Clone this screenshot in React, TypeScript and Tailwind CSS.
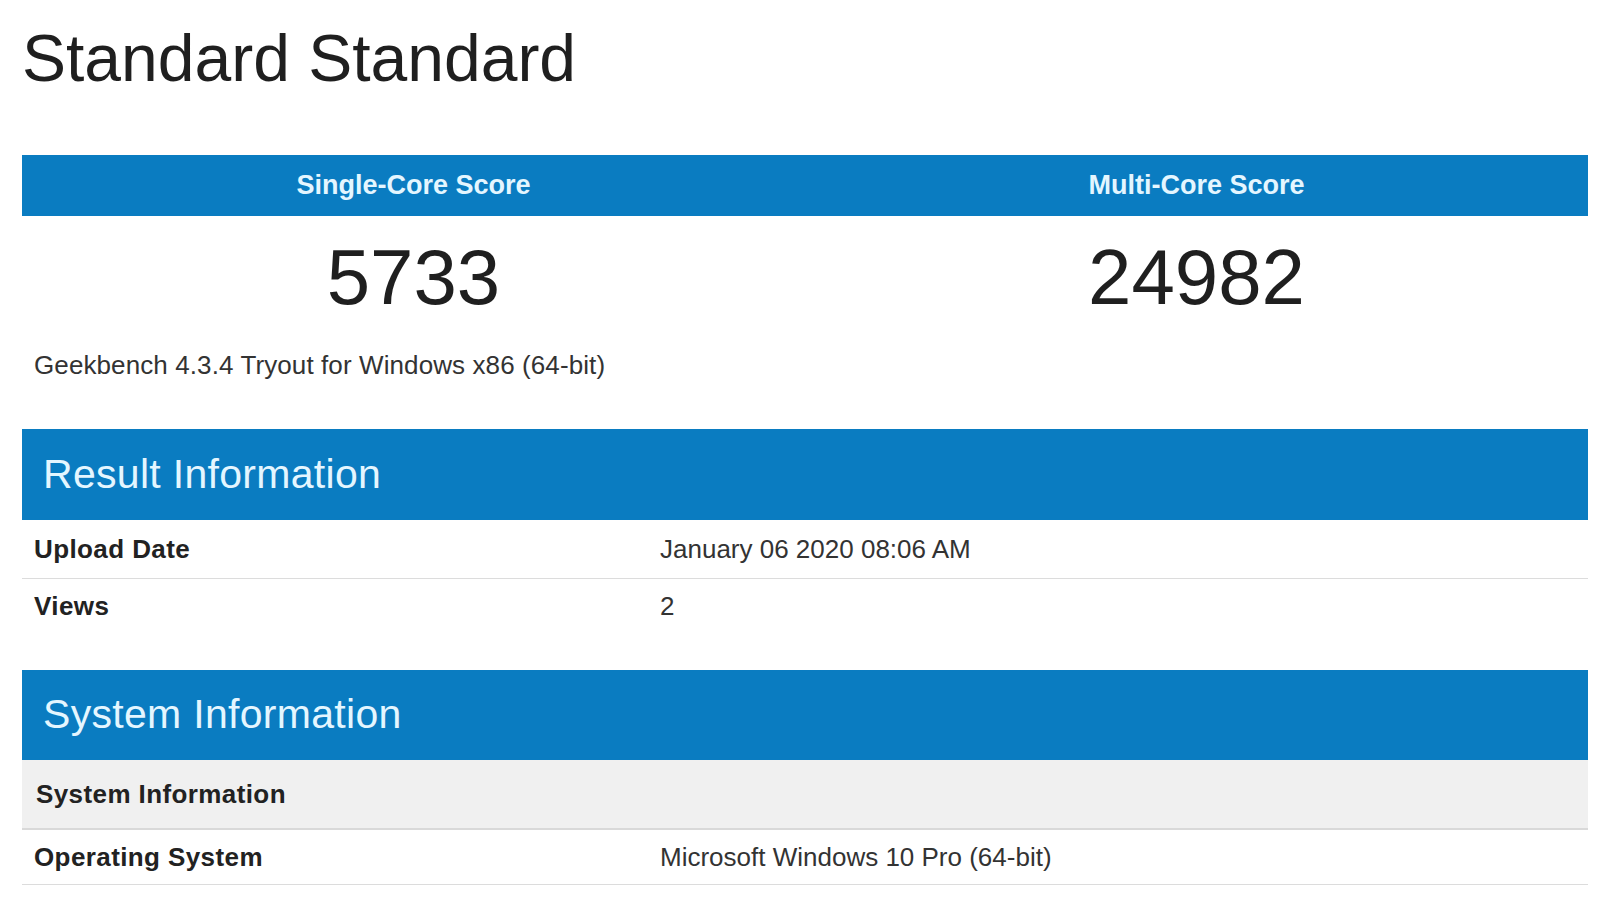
const labels = "font-bold text-[26px] tracking-[0.4px] text-[#222]";

function ScoreBox({ score }: { score: string }) {
  return (
    <div className="flex-1 flex justify-center h-[78px] leading-[78px] text-[78px] text-[#1f1f1f]">
      {score}
    </div>
  );
}

function Row({ label, value, border = true }: { label: string; value: string; border?: boolean }) {
  return (
    <div
      className={
        "grid grid-cols-[626px_1fr] items-center h-[55px] " +
        (border ? "border-b border-[#dcdcdc]" : "")
      }
    >
      <div className={"px-[12px] " + labels}>{label}</div>
      <div className="px-[12px] text-[26px] text-[#333]">{value}</div>
    </div>
  );
}

export default function App() {
  return (
    <div
      className="min-h-screen bg-white pl-[22px] pr-[12px] overflow-hidden"
      style={{ fontFamily: '"Liberation Sans", Arial, sans-serif' }}
    >
      <h1 className="mt-[25px] h-[66px] leading-[66px] text-[66px] text-[#1f1f1f] font-normal">
        Standard Standard
      </h1>

      {/* scores */}
      <div className="mt-[64px] h-[61px] flex bg-[#0a7cc1] text-[#e4f6ff] font-bold text-[27px]">
        <div className="flex-1 flex items-center justify-center">Single-Core Score</div>
        <div className="flex-1 flex items-center justify-center">Multi-Core Score</div>
      </div>
      <div className="mt-[22px] flex">
        <ScoreBox score="5733" />
        <ScoreBox score="24982" />
      </div>
      <div className="mt-[29px] h-[40px] flex items-center pl-[12px] text-[26px] tracking-[0.1px] text-[#333]">
        Geekbench 4.3.4 Tryout for Windows x86 (64-bit)
      </div>

      {/* result info */}
      <div className="mt-[44px] h-[91px] flex items-center bg-[#0a7cc1] pl-[21px] text-[41px] tracking-[0.3px] text-[#e4f6ff]">
        Result Information
      </div>
      <div className="grid grid-cols-[626px_1fr] items-center h-[59px] border-b border-[#dcdcdc]">
        <div className={"px-[12px] " + labels}>Upload Date</div>
        <div className="px-[12px] text-[26px] text-[#333]">January 06 2020 08:06 AM</div>
      </div>
      <div className="grid grid-cols-[626px_1fr] items-center h-[54px]">
        <div className={"px-[12px] " + labels}>Views</div>
        <div className="px-[12px] text-[26px] text-[#333]">2</div>
      </div>

      {/* system info */}
      <div className="mt-[37px] h-[90px] flex items-center bg-[#0a7cc1] pl-[21px] text-[41px] tracking-[0.3px] text-[#e4f6ff]">
        System Information
      </div>
      <div className="h-[70px] flex items-center bg-[#f0f0f0] border-b-2 border-[#d9d9d9] px-[14px]">
        <span className={labels}>System Information</span>
      </div>
      <Row label="Operating System" value="Microsoft Windows 10 Pro (64-bit)" />
      <Row label="Model" value="Gigabyte Technology Co., Ltd." />
    </div>
  );
}
